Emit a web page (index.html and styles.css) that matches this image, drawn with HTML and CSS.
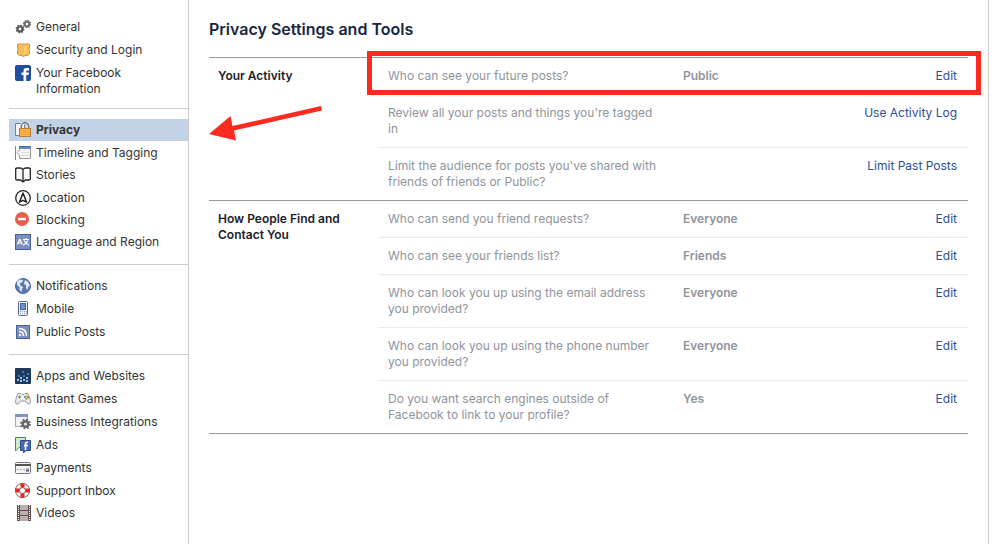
FILE: index.html
```html
<!DOCTYPE html>
<html lang="en">
<head>
<meta charset="utf-8">
<title>Privacy Settings and Tools</title>
<link rel="stylesheet" href="styles.css">
</head>
<body>
<div class="page">
  <nav class="sidebar" aria-label="Settings">
    <ul class="group">
      <li><a class="item" href="#"><svg class="icon" viewBox="0 0 16 16"><circle cx="5" cy="10" r="2.500" fill="none" stroke="#555" stroke-width="2.200"/><circle cx="5" cy="10" r="3.700" fill="none" stroke="#555" stroke-width="1.400" stroke-dasharray="1.500 1.400"/><circle cx="12" cy="5" r="2.300" fill="none" stroke="#707070" stroke-width="2.200"/><circle cx="12" cy="5" r="3.500" fill="none" stroke="#707070" stroke-width="1.400" stroke-dasharray="1.400 1.350"/></svg>General</a></li>
      <li><a class="item" href="#"><svg class="icon" viewBox="0 0 16 16"><path d="M2.500 2.500 4.500 1.500 6.500 2.500 8.500 1.500 10.500 2.500 12.500 1.500 14.500 2.500V5Q13.500 7 14.500 9.500V12L12.500 13.500H10.500L8.500 14.500 6.500 13.500H4.500L2.500 12V9.500Q3.500 7 2.500 5Z" fill="#fdbd52" stroke="#bd9052"/><path d="M9.500 4H12v5l-2.500 3" fill="#ffd27e"/></svg>Security and Login</a></li>
      <li><a class="item item-wrapped" href="#"><svg class="icon" viewBox="0 0 16 16"><rect width="16" height="16" rx="2" fill="#204f9f"/><path d="M8.500 16V10H6.500V7.500h2V6Q8.500 3 11.500 3H14v2.500h-1.500Q11.200 5.500 11.200 6.700v.8H14L13.500 10h-2.300v6Z" fill="#fff"/></svg>Your Facebook Information</a></li>
    </ul>
    <ul class="group">
      <li><a class="item selected" href="#" aria-current="page"><svg class="icon" viewBox="0 0 16 16"><path d="M.5 1.500h9v12h-9Z" fill="#f4f7fc" stroke="#6480b5"/><path d="M6.200 7V4.500a3.800 3.800 0 0 1 7.600 0V7" fill="none" stroke="#fff" stroke-width="3"/><path d="M6.200 7V4.500a3.800 3.800 0 0 1 7.600 0V7" fill="none" stroke="#777" stroke-width="1.600"/><rect x="4.500" y="6.500" width="11" height="8" fill="#fdb64c" stroke="#b8803a"/><path d="M5 8.500h10M5 10.500h10M5 12.500h10" stroke="#f0a23a"/></svg>Privacy</a></li>
      <li class="close"><a class="item" href="#"><svg class="icon" viewBox="0 0 16 16"><path d="M.5 1v14" stroke="#6f86b8"/><path d="M4.500 1.500h11v12h-11V10L2 7.500 4.500 5Z" fill="#f5f5f5" stroke="#999"/><path d="M4 3h12" stroke="#6f88be" stroke-width="2"/><path d="M4 1.500h12" stroke="#4a66a3"/><path d="M6 7.500h8M6 10.500h8" stroke="#ddd"/></svg>Timeline and Tagging</a></li>
      <li><a class="item" href="#"><svg class="icon" viewBox="0 0 16 16"><path d="M8 2.500Q7 1 5 1H2Q.7 1 .7 2.300v9.400Q.7 13 2 13h3.500L8 15l2.500-2H14q1.300 0 1.300-1.300V2.300Q15.300 1 14 1h-3Q9 1 8 2.500v12" fill="none" stroke="#222" stroke-width="1.300"/></svg>Stories</a></li>
      <li class="close"><a class="item" href="#"><svg class="icon" viewBox="0 0 16 16"><circle cx="8" cy="8" r="7.300" fill="#fff" stroke="#222" stroke-width="1.300"/><path d="M8 3 4.500 12 8 10.300 11.500 12Z" fill="none" stroke="#222" stroke-width="1.500" stroke-linejoin="round"/></svg>Location</a></li>
      <li class="close"><a class="item" href="#"><svg class="icon" viewBox="0 0 16 16"><circle cx="7" cy="7" r="7" fill="#e6604f"/><path d="M3 7h8" stroke="#fff" stroke-width="2.400"/></svg>Blocking</a></li>
      <li><a class="item" href="#"><svg class="icon" viewBox="0 0 16 16"><rect x=".5" y=".5" width="15" height="15" fill="#7d8fbd" stroke="#48609b"/><path d="M2.500 10.500 4.500 5.500h.6l2 5M3.300 9h3M8 5.500h6M11 4v1.500M9 6.500q1.500 3 5 4.500M13 6.500q-1.500 3-5 4.500" fill="none" stroke="#fff" stroke-width="1.200"/></svg>Language and Region</a></li>
    </ul>
    <ul class="group">
      <li><a class="item" href="#"><svg class="icon" viewBox="0 0 16 16"><circle cx="8" cy="8" r="7.500" fill="#5b7ab3" stroke="#48659f"/><path d="M2 3.500 5 1.500 8 2 7 4.500 4.500 5.500 6 8 8 9 7 11 6.500 14 4.500 12 4.500 9 2 7ZM10 2l3.500 2.500L15 8l-2 1-.5 3-1.500-2V7L9 6 9.500 4Z" fill="#dfe8f5"/></svg>Notifications</a></li>
      <li><a class="item" href="#"><svg class="icon" viewBox="0 0 16 16"><rect x="3.500" y=".5" width="9" height="14" rx="1" fill="#f3f5f9" stroke="#50658f"/><rect x="5.500" y="2.500" width="5" height="6" fill="#6e8fca" stroke="#47639b"/><path d="M5 10.500h7M5 12.500h7" stroke="#8a94a8" stroke-dasharray="1 1"/></svg>Mobile</a></li>
      <li><a class="item" href="#"><svg class="icon" viewBox="0 0 16 16"><rect x="1.500" y="1.500" width="13" height="13" fill="#7d8fbd" stroke="#48609b"/><circle cx="5" cy="11" r="1.200" fill="#fff"/><path d="M4 7.500q4.500 0 4.500 4.500M4 4.500q7.500 0 7.500 7.500" fill="none" stroke="#fff" stroke-width="1.500"/></svg>Public Posts</a></li>
    </ul>
    <ul class="group">
      <li><a class="item" href="#"><svg class="icon" viewBox="0 0 16 16"><rect width="16" height="16" rx="1" fill="#1e3860"/><path d="M2 11h2v2H2ZM5 9h2v2H5ZM5 12h2v2H5ZM8 11h2v2H8ZM11 9h2v2h-2ZM11 12h2v2h-2Z" fill="#8cc9ee"/><path d="M3 7h2v2H3ZM8 7h2v2H8ZM12 5h2v2h-2ZM7 3h2v2H7Z" fill="#3e7eae"/></svg>Apps and Websites</a></li>
      <li><a class="item" href="#"><svg class="icon" viewBox="0 0 16 16"><path d="M3 2.500h3l1 1h2l1-1h3q2 3 2.500 8.500Q15 14 13 13l-2.500-3h-5L3 13Q1 14 .5 11 1 5.500 3 2.500Z" fill="#eee" stroke="#999"/><path d="M3 6h3M4.500 4.500v3" stroke="#777"/><circle cx="10" cy="6" r="1" fill="#3d78cc"/><circle cx="11.500" cy="4.700" r="1" fill="#e3b31e"/><circle cx="13" cy="6.200" r="1" fill="#df4636"/><circle cx="11.500" cy="7.700" r="1" fill="#45a957"/></svg>Instant Games</a></li>
      <li><a class="item" href="#"><svg class="icon" viewBox="0 0 16 16"><rect x=".5" y=".5" width="12" height="12" fill="#f2f2f2" stroke="#aaa"/><path d="M0 1.500h13" stroke="#7c93c4" stroke-width="3"/><circle cx="10.500" cy="10" r="2.700" fill="#eee" stroke="#666" stroke-width="2.400"/><circle cx="10.500" cy="10" r="4.500" fill="none" stroke="#666" stroke-width="1.800" stroke-dasharray="1.800 1.730"/></svg>Business Integrations</a></li>
      <li><a class="item" href="#"><svg class="icon" viewBox="0 0 16 16"><path d="M.5.500h10v10H4L.5 14Z" fill="#d5ebcf" stroke="#3f8d42"/><path d="M5.500 3.500h10v10H11L8.500 16v-2.500h-3Z" fill="#496aac" stroke="#2d4c8b"/><path d="M10.500 13V7q0-2 2.500-2M9 8.500h4" fill="none" stroke="#fff" stroke-width="1.600"/></svg>Ads</a></li>
      <li><a class="item" href="#"><svg class="icon" viewBox="0 0 16 16"><rect x=".5" y="2.500" width="15" height="11" rx="1" fill="#f2f2f2" stroke="#777"/><path d="M0 5h16" stroke="#555" stroke-width="2"/><path d="M2 9.500h8" stroke="#aaa" stroke-dasharray="2 1"/><path d="M11 8.500h3" stroke="#eea63a"/><path d="M11 10.500h3" stroke="#3456bd" stroke-width="2"/></svg>Payments</a></li>
      <li class="close"><a class="item" href="#"><svg class="icon" viewBox="0 0 16 16"><circle cx="7.500" cy="7.500" r="5" fill="none" stroke="#555" stroke-width="5"/><circle cx="7.500" cy="7.500" r="5" fill="none" stroke="#fff" stroke-width="3.400"/><path d="M7.500 .5v4M7.500 10.500v4M.5 7.500h4M10.500 7.500h4" stroke="#f0201c" stroke-width="4"/></svg>Support Inbox</a></li>
      <li><a class="item" href="#"><svg class="icon" viewBox="0 0 16 16"><path d="M2 0h14v16H2Z" fill="#5f5250"/><path d="M5 0h8v5H5ZM5 6h8v4H5ZM5 11h8v5H5Z" fill="#bbb0ac"/><path d="M3.500 0v16M14.500 0v16" stroke="#fff" stroke-dasharray="1 1"/></svg>Videos</a></li>
    </ul>
  </nav>
  <main class="content">
    <h1>Privacy Settings and Tools</h1>
    <section class="section">
      <h2>Your Activity</h2>
      <ul class="rows">
        <li class="row highlighted"><span>Who can see your future posts?</span><strong>Public</strong><a href="#">Edit</a></li>
        <li class="row"><span>Review all your posts and things you're tagged in</span><strong></strong><a href="#">Use Activity Log</a></li>
        <li class="row"><span>Limit the audience for posts you've shared with friends of friends or Public?</span><strong></strong><a href="#">Limit Past Posts</a></li>
      </ul>
      <svg class="arrow" viewBox="0 0 114 36" aria-hidden="true"><path d="M112 0 113 4.500 25 24.500 27 34.500 0 28 21.500 10 23.500 20Z" fill="#ff2a1f"/></svg>
    </section>
    <section class="section">
      <h2>How People Find and Contact You</h2>
      <ul class="rows">
        <li class="row"><span>Who can send you friend requests?</span><strong>Everyone</strong><a href="#">Edit</a></li>
        <li class="row"><span>Who can see your friends list?</span><strong>Friends</strong><a href="#">Edit</a></li>
        <li class="row"><span>Who can look you up using the email address you provided?</span><strong>Everyone</strong><a href="#">Edit</a></li>
        <li class="row"><span>Who can look you up using the phone number you provided?</span><strong>Everyone</strong><a href="#">Edit</a></li>
        <li class="row"><span>Do you want search engines outside of Facebook to link to your profile?</span><strong>Yes</strong><a href="#">Edit</a></li>
      </ul>
    </section>
  </main>
</div>
</body>
</html>
```
FILE: styles.css
```css
* { box-sizing: border-box; }
body {
  margin: 0;
  background: #fff;
  color: #333;
  font: 12px/16px Inter, "Liberation Sans", sans-serif;
}
ul { list-style: none; margin: 0; padding: 0; }
a { text-decoration: none; }
.page {
  display: flex;
  min-height: 100vh;
  margin-right: 15px;
  border-right: 1px solid #ccc;
}
.sidebar {
  flex: 0 0 189px;
  padding: 6px 0 0 9px;
  border-right: 1px solid #ccc;
}
.group { padding: 10px 0; border-bottom: 1px solid #ccc; }
.group:last-child { border-bottom: 0; }
.group li { margin-bottom: 1px; }
.group .close { margin-bottom: 0; }
.item {
  display: flex;
  gap: 5px;
  padding: 3px 20px 3px 6px;
  color: #333;
}
.item-wrapped { padding-bottom: 0; }
.selected { background: #c4d2e7; font-weight: 700; }
.icon { flex: none; width: 16px; height: 16px; }
.content { flex: 1; min-width: 0; padding: 19px 20px; }
h1 {
  margin: 0 0 18px;
  color: #162643;
  font-size: 16px;
  line-height: 20px;
  font-weight: 600;
}
.section {
  position: relative;
  display: grid;
  grid-template-columns: 170px 1fr;
  border-top: 1px solid #999;
}
.section:last-child { border-bottom: 1px solid #999; }
h2 {
  margin: 0;
  padding: 10px 9px;
  color: #1d2129;
  font-size: 12px;
  line-height: 16px;
  font-weight: 600;
}
.row {
  position: relative;
  display: grid;
  grid-template-columns: 275px 1fr auto;
  column-gap: 20px;
  padding: 10px 11px 10px 9px;
  border-bottom: 1px solid #e9eaed;
  color: #90949c;
}
.row:last-child { border-bottom: 0; }
.row strong { font-weight: 600; }
.row a { color: #2c4f95; }
.highlighted::after {
  content: "";
  position: absolute;
  inset: -7px -13px -1px -12px;
  border: 5px solid #ff2a1f;
  pointer-events: none;
}
.arrow {
  position: absolute;
  left: 0;
  top: 48px;
  width: 114px;
  height: 36px;
}
```
